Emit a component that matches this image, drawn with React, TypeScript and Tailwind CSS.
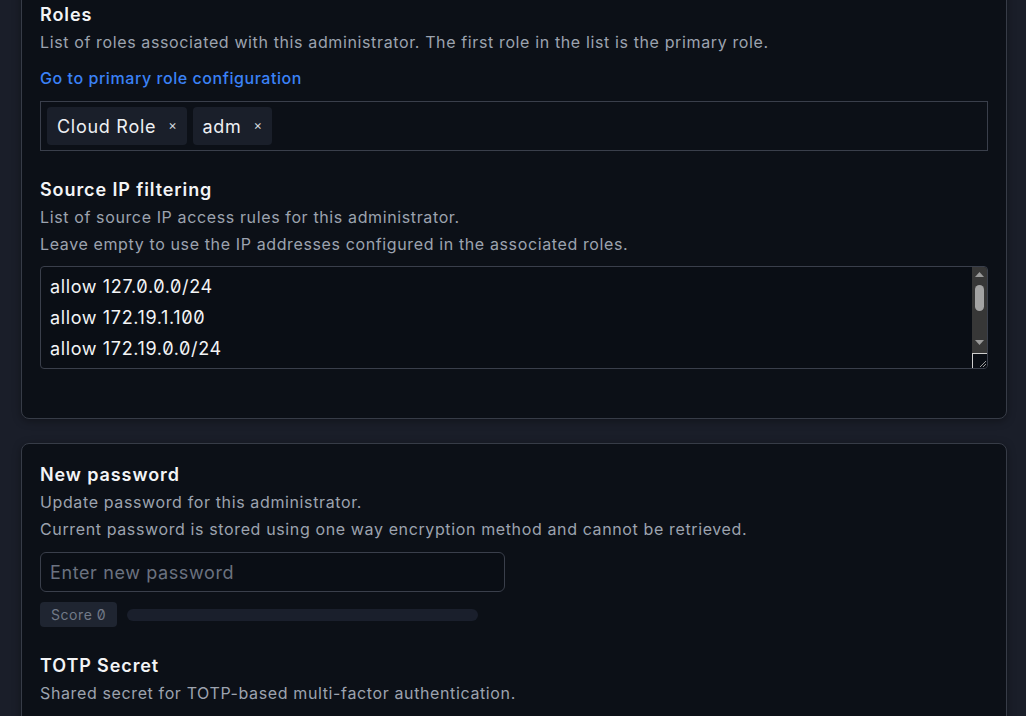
const ipRules = [
  'allow 127.0.0.0/24',
  'allow 172.19.1.100',
  'allow 172.19.0.0/24',
  'allow 10.0.0.0/8',
  'allow 192.168.0.0/16',
  'allow 192.168.10.25',
  'deny 0.0.0.0/0',
]

const roles = ['Cloud Role', 'adm']

function FieldHeader({ title, lines }: { title: string; lines: string[] }) {
  return (
    <div>
      <h3 className="text-[18px] leading-7 font-semibold tracking-[0.05em] text-[#f3f4f6]">{title}</h3>
      {lines.map((line) => (
        <p key={line} className="text-[16px] leading-[27px] tracking-[0.039em] text-[#9ca3af]">
          {line}
        </p>
      ))}
    </div>
  )
}

function RoleTag({ label }: { label: string }) {
  return (
    <span className="inline-flex h-[38px] items-center rounded-[4px] bg-[#1a1f2a] pl-[10px] pr-[9px] text-[18px] tracking-[0.04em] text-[#eef0f3]">
      {label}
      <span className="ml-[12px] text-[13px] text-[#d1d5db]">×</span>
    </span>
  )
}

// the browser's own scrollbar does not show up in the capture, so it is drawn here
function FakeScrollbar() {
  return (
    <div className="absolute top-px right-px bottom-px flex w-[15px] flex-col rounded-r-[3px] bg-[#373737]">
      <div className="flex h-[15px] items-center justify-center">
        <svg width="9" height="5" viewBox="0 0 9 5">
          <path d="M0 5 L4.5 0 L9 5 Z" fill="#9a9a9a" />
        </svg>
      </div>
      <div className="flex-1 px-[3px] pt-[3px]">
        <div className="h-[26px] w-[9px] rounded-full bg-[#a3a3a3]" />
      </div>
      <div className="flex h-[15px] items-center justify-center">
        <svg width="9" height="5" viewBox="0 0 9 5">
          <path d="M0 0 L4.5 5 L9 0 Z" fill="#9a9a9a" />
        </svg>
      </div>
      <div className="h-[3px]" />
      <div className="flex h-[15px] items-end justify-end rounded-br-[3px] border-t border-l border-[#cfcfcf] bg-[#0a0e15]">
        <svg width="9" height="9" viewBox="0 0 9 9">
          <path d="M8 2 L2 8 M8 5 L5 8" stroke="#9a9a9a" strokeWidth="1" />
        </svg>
      </div>
    </div>
  )
}

export default function App() {
  return (
    <div
      className="min-h-screen overflow-hidden bg-[#1a1e29] pl-[21px] pr-[19px] [color-scheme:dark]"
      style={{ fontFamily: 'Inter, "Noto Sans", sans-serif' }}
    >
      <section className="-mt-[18px] rounded-lg border border-[#373c47] bg-[#0c1017] px-[18px] pt-[18px] pb-[49px] shadow-[0_2px_8px_rgba(0,0,0,0.35)]">
        <FieldHeader
          title="Roles"
          lines={['List of roles associated with this administrator. The first role in the list is the primary role.']}
        />
        <a href="#" className="mt-[9px] block text-[16px] leading-[27px] font-medium tracking-[0.035em] text-[#3b82f6]">
          Go to primary role configuration
        </a>
        <div className="mt-[9px] flex h-[50px] items-center gap-[6px] border border-[#3a3f4b] px-[6px]">
          {roles.map((r) => (
            <RoleTag key={r} label={r} />
          ))}
        </div>

        <div className="mt-[25px]">
          <FieldHeader
            title="Source IP filtering"
            lines={[
              'List of source IP access rules for this administrator.',
              'Leave empty to use the IP addresses configured in the associated roles.',
            ]}
          />
        </div>
        <div className="relative mt-[8px]">
          <textarea
            readOnly
            rows={3}
            defaultValue={ipRules.join('\n')}
            className="block h-[103px] w-full resize-none overflow-hidden rounded-[4px] border border-[#3a3f4b] bg-[#0a0e15] px-[9px] py-[4px] text-[18px] leading-[31px] tracking-[0.035em] text-[#f3f4f6] slashed-zero outline-none"
          />
          <FakeScrollbar />
        </div>
      </section>

      <section className="mt-[24px] rounded-lg border border-[#373c47] bg-[#0c1017] px-[18px] pt-[17px] pb-[48px] shadow-[0_2px_8px_rgba(0,0,0,0.35)]">
        <FieldHeader
          title="New password"
          lines={[
            'Update password for this administrator.',
            'Current password is stored using one way encryption method and cannot be retrieved.',
          ]}
        />
        <input
          type="password"
          placeholder="Enter new password"
          className="mt-[9px] block h-[40px] w-[465px] rounded-md border border-[#3a3f4b] bg-[#0a0e15] px-[9px] text-[18px] tracking-[0.034em] text-[#f3f4f6] placeholder:text-[#6b7280] outline-none"
        />
        <div className="mt-[10px] flex items-center gap-[10px]">
          <span className="flex h-[25px] items-center rounded-[4px] bg-[#1f2531] px-[11px] text-[14px] tracking-[0.04em] text-[#727a88] slashed-zero">
            Score 0
          </span>
          <div className="h-[12px] w-[351px] rounded-full bg-[#1a1f2c]" />
        </div>

        <div className="mt-[25px]">
          <FieldHeader title="TOTP Secret" lines={['Shared secret for TOTP-based multi-factor authentication.']} />
        </div>
      </section>
    </div>
  )
}
